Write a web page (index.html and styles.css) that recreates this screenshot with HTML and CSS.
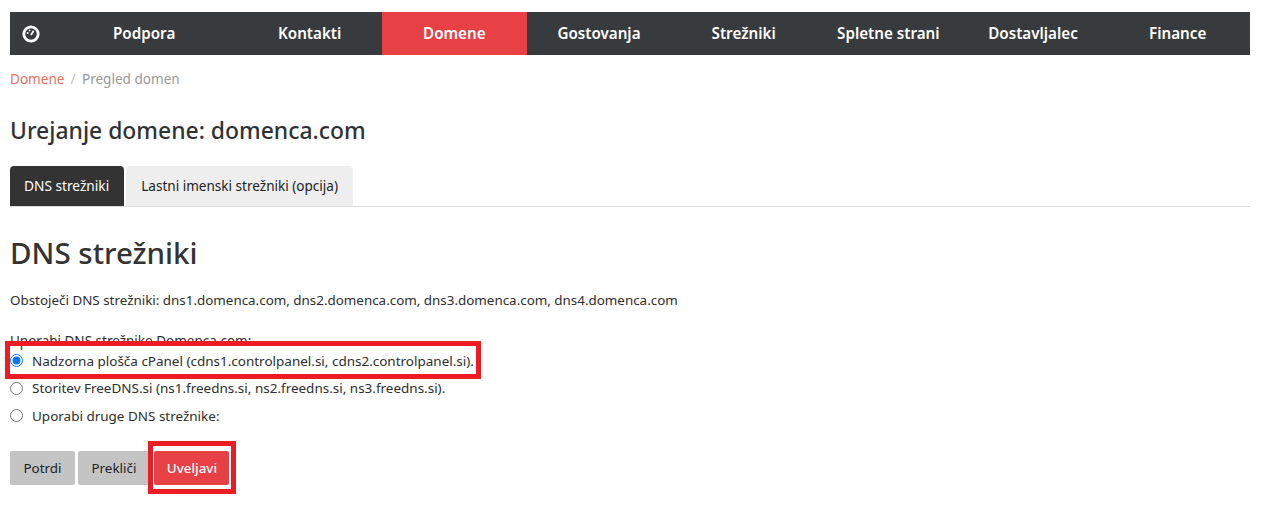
FILE: index.html
```html
<!DOCTYPE html>
<html lang="sl">
<head>
<meta charset="utf-8">
<title>Urejanje domene</title>
<link rel="stylesheet" href="styles.css">
</head>
<body>
<nav class="nav">
  <a class="nav-icon" href="#" aria-label="Nadzorna plošča">
    <svg width="18" height="18" viewBox="0 0 18 18"><circle cx="9" cy="9" r="7.2" fill="none" stroke="#fff" stroke-width="2.8"/><path d="M9 10 L11.6 5.8" stroke="#fff" stroke-width="1.7" fill="none"/><circle cx="5.6" cy="8" r="1" fill="#fff"/><circle cx="7.6" cy="5.4" r="0.9" fill="#fff"/></svg>
  </a>
  <a class="nav-item wide" href="#">Podpora</a>
  <a class="nav-item" href="#">Kontakti</a>
  <a class="nav-item active" href="#">Domene</a>
  <a class="nav-item" href="#">Gostovanja</a>
  <a class="nav-item" href="#">Strežniki</a>
  <a class="nav-item" href="#">Spletne strani</a>
  <a class="nav-item" href="#">Dostavljalec</a>
  <a class="nav-item" href="#">Finance</a>
</nav>
<div class="crumbs"><a href="#">Domene</a><span class="sep">/</span><span>Pregled domen</span></div>
<h1 class="title">Urejanje domene: domenca.com</h1>
<div class="tabs">
  <a class="tab active" href="#">DNS strežniki</a>
  <a class="tab" href="#">Lastni imenski strežniki (opcija)</a>
</div>
<h2 class="section">DNS strežniki</h2>
<p class="current">Obstoječi DNS strežniki: dns1.domenca.com, dns2.domenca.com, dns3.domenca.com, dns4.domenca.com</p>
<p class="lead">Uporabi DNS strežnike Domenca.com:</p>
<div class="options">
  <label class="option marked"><input type="radio" name="ns" checked>Nadzorna plošča cPanel (cdns1.controlpanel.si, cdns2.controlpanel.si).</label>
  <label class="option"><input type="radio" name="ns">Storitev FreeDNS.si (ns1.freedns.si, ns2.freedns.si, ns3.freedns.si).</label>
  <label class="option"><input type="radio" name="ns">Uporabi druge DNS strežnike:</label>
</div>
<div class="buttons">
  <button class="btn">Potrdi</button>
  <button class="btn">Prekliči</button>
  <span class="marked-btn"><button class="btn danger">Uveljavi</button></span>
</div>
</body>
</html>
```
FILE: styles.css
```css
*, *::before, *::after { box-sizing: border-box; }
html, body { margin: 0; }
body {
  padding: 12px 22px 30px 10px;
  background: #fff;
  color: #2e2e2e;
  font: 13.4px/20px "Noto Sans", sans-serif;
}
a { text-decoration: none; }
.nav { display: flex; height: 43px; background: #373b3e; }
.nav-icon { width: 41px; display: flex; align-items: center; justify-content: center; padding: 1px 0 0 1px; }
.nav-item {
  flex: 1;
  display: flex;
  align-items: center;
  justify-content: center;
  padding-bottom: 2px;
  color: #fff;
  font-size: 15.2px;
  font-weight: 600;
}
.nav-item.wide { flex: none; width: 186.3px; }
.nav-item.active { background: #e74045; }
.crumbs { display: flex; margin-top: 14px; height: 20px; color: #999; font-size: 13.55px; }
.crumbs a { color: #e8705a; }
.sep { margin: 0 6.5px 0 6px; color: #bbb; }
.title { margin: 27px 0 0; font-size: 22.9px; line-height: 30px; font-weight: 500; color: #2f3336; }
.tabs { display: flex; gap: 2px; margin-top: 20px; height: 41px; border-bottom: 1px solid #ddd; }
.tab {
  height: 40px;
  display: flex;
  align-items: center;
  padding: 0 15px;
  background: #eee;
  color: #222;
  font-size: 13.55px;
  border-radius: 4px 4px 0 0;
}
.tab.active { padding: 0 15px 0 14px; background: #333; color: #fff; font-size: 13.7px; }
.section { margin: 28px 0 0; font-size: 29.5px; line-height: 36px; font-weight: 500; color: #333; }
.current { margin: 19px 0 0; }
.lead { margin: 21px 0 0; font-size: 13.5px; }
.options { display: flex; flex-direction: column; margin-top: -4px; font-size: 13.48px; }
.option { height: 27.5px; display: flex; align-items: center; position: relative; }
.option input { width: 13px; height: 13px; margin: 0 9px 0 0; flex: none; }
.marked::before {
  content: "";
  position: absolute;
  left: -5px;
  top: -6px;
  width: 476px;
  height: 38px;
  border: 5px solid #ed1c24;
  pointer-events: none;
}
.buttons { display: flex; gap: 3px; margin-top: 21.5px; }
.btn {
  height: 34px;
  padding: 0 13.5px;
  border: 0;
  border-radius: 2px;
  background: #c4c4c4;
  color: #222;
  font: inherit;
}
.marked-btn { position: relative; display: flex; margin-left: 1px; }
.danger {
  padding: 0 13px;
  width: 75px;
  background: #e74045;
  color: #fff;
  font-weight: 500;
}
.marked-btn::after {
  content: "";
  position: absolute;
  left: -6px;
  top: -10px;
  width: 88px;
  height: 53px;
  border: 5px solid #ed1c24;
  pointer-events: none;
}
```
